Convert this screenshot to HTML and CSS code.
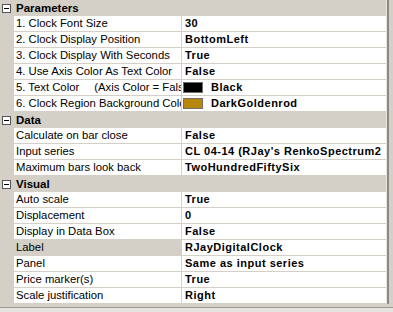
FILE: index.html
```html
<!DOCTYPE html>
<html lang="en">
<head>
  <meta charset="UTF-8">
  <title>Indicator Properties</title>
  <link rel="stylesheet" href="styles.css">
</head>
<body>
  <div class="window">
    <div class="propgrid">
      <div class="cat">
        <span class="toggle"><svg width="9" height="9" viewBox="0 0 9 9"><rect x="0.5" y="0.5" width="8" height="8" fill="#fff" stroke="#555"/><path d="M2 4.5h5" stroke="#000"/></svg></span>
        <span class="cat-name">Parameters</span>
      </div>
      <div class="row"><span class="gap"></span><span class="name">1. Clock Font Size</span><span class="value">30</span></div>
      <div class="row"><span class="gap"></span><span class="name">2. Clock Display Position</span><span class="value">BottomLeft</span></div>
      <div class="row"><span class="gap"></span><span class="name">3. Clock Display With Seconds</span><span class="value">True</span></div>
      <div class="row"><span class="gap"></span><span class="name">4. Use Axis Color As Text Color</span><span class="value">False</span></div>
      <div class="row"><span class="gap"></span><span class="name">5. Text Color<span class="tab">(Axis Color = False)</span></span><span class="value color"><i class="swatch black"></i>Black</span></div>
      <div class="row"><span class="gap"></span><span class="name">6. Clock Region Background Color</span><span class="value color"><i class="swatch gold"></i>DarkGoldenrod</span></div>

      <div class="cat">
        <span class="toggle"><svg width="9" height="9" viewBox="0 0 9 9"><rect x="0.5" y="0.5" width="8" height="8" fill="#fff" stroke="#555"/><path d="M2 4.5h5" stroke="#000"/></svg></span>
        <span class="cat-name">Data</span>
      </div>
      <div class="row"><span class="gap"></span><span class="name">Calculate on bar close</span><span class="value">False</span></div>
      <div class="row"><span class="gap"></span><span class="name">Input series</span><span class="value">CL 04-14 (RJay's RenkoSpectrum2</span></div>
      <div class="row"><span class="gap"></span><span class="name">Maximum bars look back</span><span class="value">TwoHundredFiftySix</span></div>

      <div class="cat">
        <span class="toggle"><svg width="9" height="9" viewBox="0 0 9 9"><rect x="0.5" y="0.5" width="8" height="8" fill="#fff" stroke="#555"/><path d="M2 4.5h5" stroke="#000"/></svg></span>
        <span class="cat-name">Visual</span>
      </div>
      <div class="row"><span class="gap"></span><span class="name">Auto scale</span><span class="value">True</span></div>
      <div class="row"><span class="gap"></span><span class="name">Displacement</span><span class="value">0</span></div>
      <div class="row"><span class="gap"></span><span class="name">Display in Data Box</span><span class="value">False</span></div>
      <div class="row selected"><span class="gap"></span><span class="name">Label</span><span class="value">RJayDigitalClock</span></div>
      <div class="row"><span class="gap"></span><span class="name">Panel</span><span class="value">Same as input series</span></div>
      <div class="row"><span class="gap"></span><span class="name">Price marker(s)</span><span class="value">True</span></div>
      <div class="row"><span class="gap"></span><span class="name">Scale justification</span><span class="value">Right</span></div>
    </div>
    <div class="edge"></div>
  </div>
  <div class="footer"></div>
</body>
</html>
```

FILE: styles.css
```css
body {
  margin: 0;
  background-color: #d4d0c8;
  font-family: 'Liberation Sans', Arial, sans-serif;
  font-size: 11px;
  color: #000;
  overflow: hidden;
}

.window {
  display: flex;
}

.propgrid {
  width: 386px;
  border-right: 1px solid #e8e6e0;
  background-color: #fff;
}

.edge {
  width: 2px;
  background-color: #8c8a84;
}

/* category header rows */
.cat {
  display: flex;
  align-items: center;
  height: 16px;
  background-color: #d4d0c8;
}

.toggle {
  width: 14px;
  height: 16px;
  display: flex;
  align-items: center;
  padding-left: 2px;
  box-sizing: border-box;
}

.toggle svg {
  display: block;
}

.cat-name {
  padding-left: 2px;
  font-weight: bold;
  font-size: 11.5px;
  line-height: 16px;
}

/* property rows */
.row {
  display: grid;
  grid-template-columns: 14px 168px 1fr;
  height: 16px;
}

.gap {
  background-color: #d4d0c8;
}

.name,
.value {
  line-height: 15px;
  border-bottom: 1px solid #d4d0c8;
  white-space: pre;
  overflow: hidden;
}

.name {
  padding-left: 2px;
  font-size: 11.3px;
  border-right: 1px solid #d4d0c8;
}

.value {
  padding-left: 3px;
  font-weight: bold;
  letter-spacing: 0.5px;
}

.value.color {
  display: flex;
  align-items: center;
  padding-left: 1px;
}

.swatch {
  width: 18px;
  height: 9px;
  border: 1px solid #6e6e6e;
  margin-right: 8px;
}

.swatch.black {
  background-color: #000;
}

.swatch.gold {
  background-color: #b8860b;
}

.tab {
  margin-left: 15px;
}

.selected .name {
  background-color: #d4d0c8;
}

.footer {
  height: 5px;
  margin-top: 3px;
  border-top: 1px solid #a09c94;
  background-color: #e6e4de;
}
```
